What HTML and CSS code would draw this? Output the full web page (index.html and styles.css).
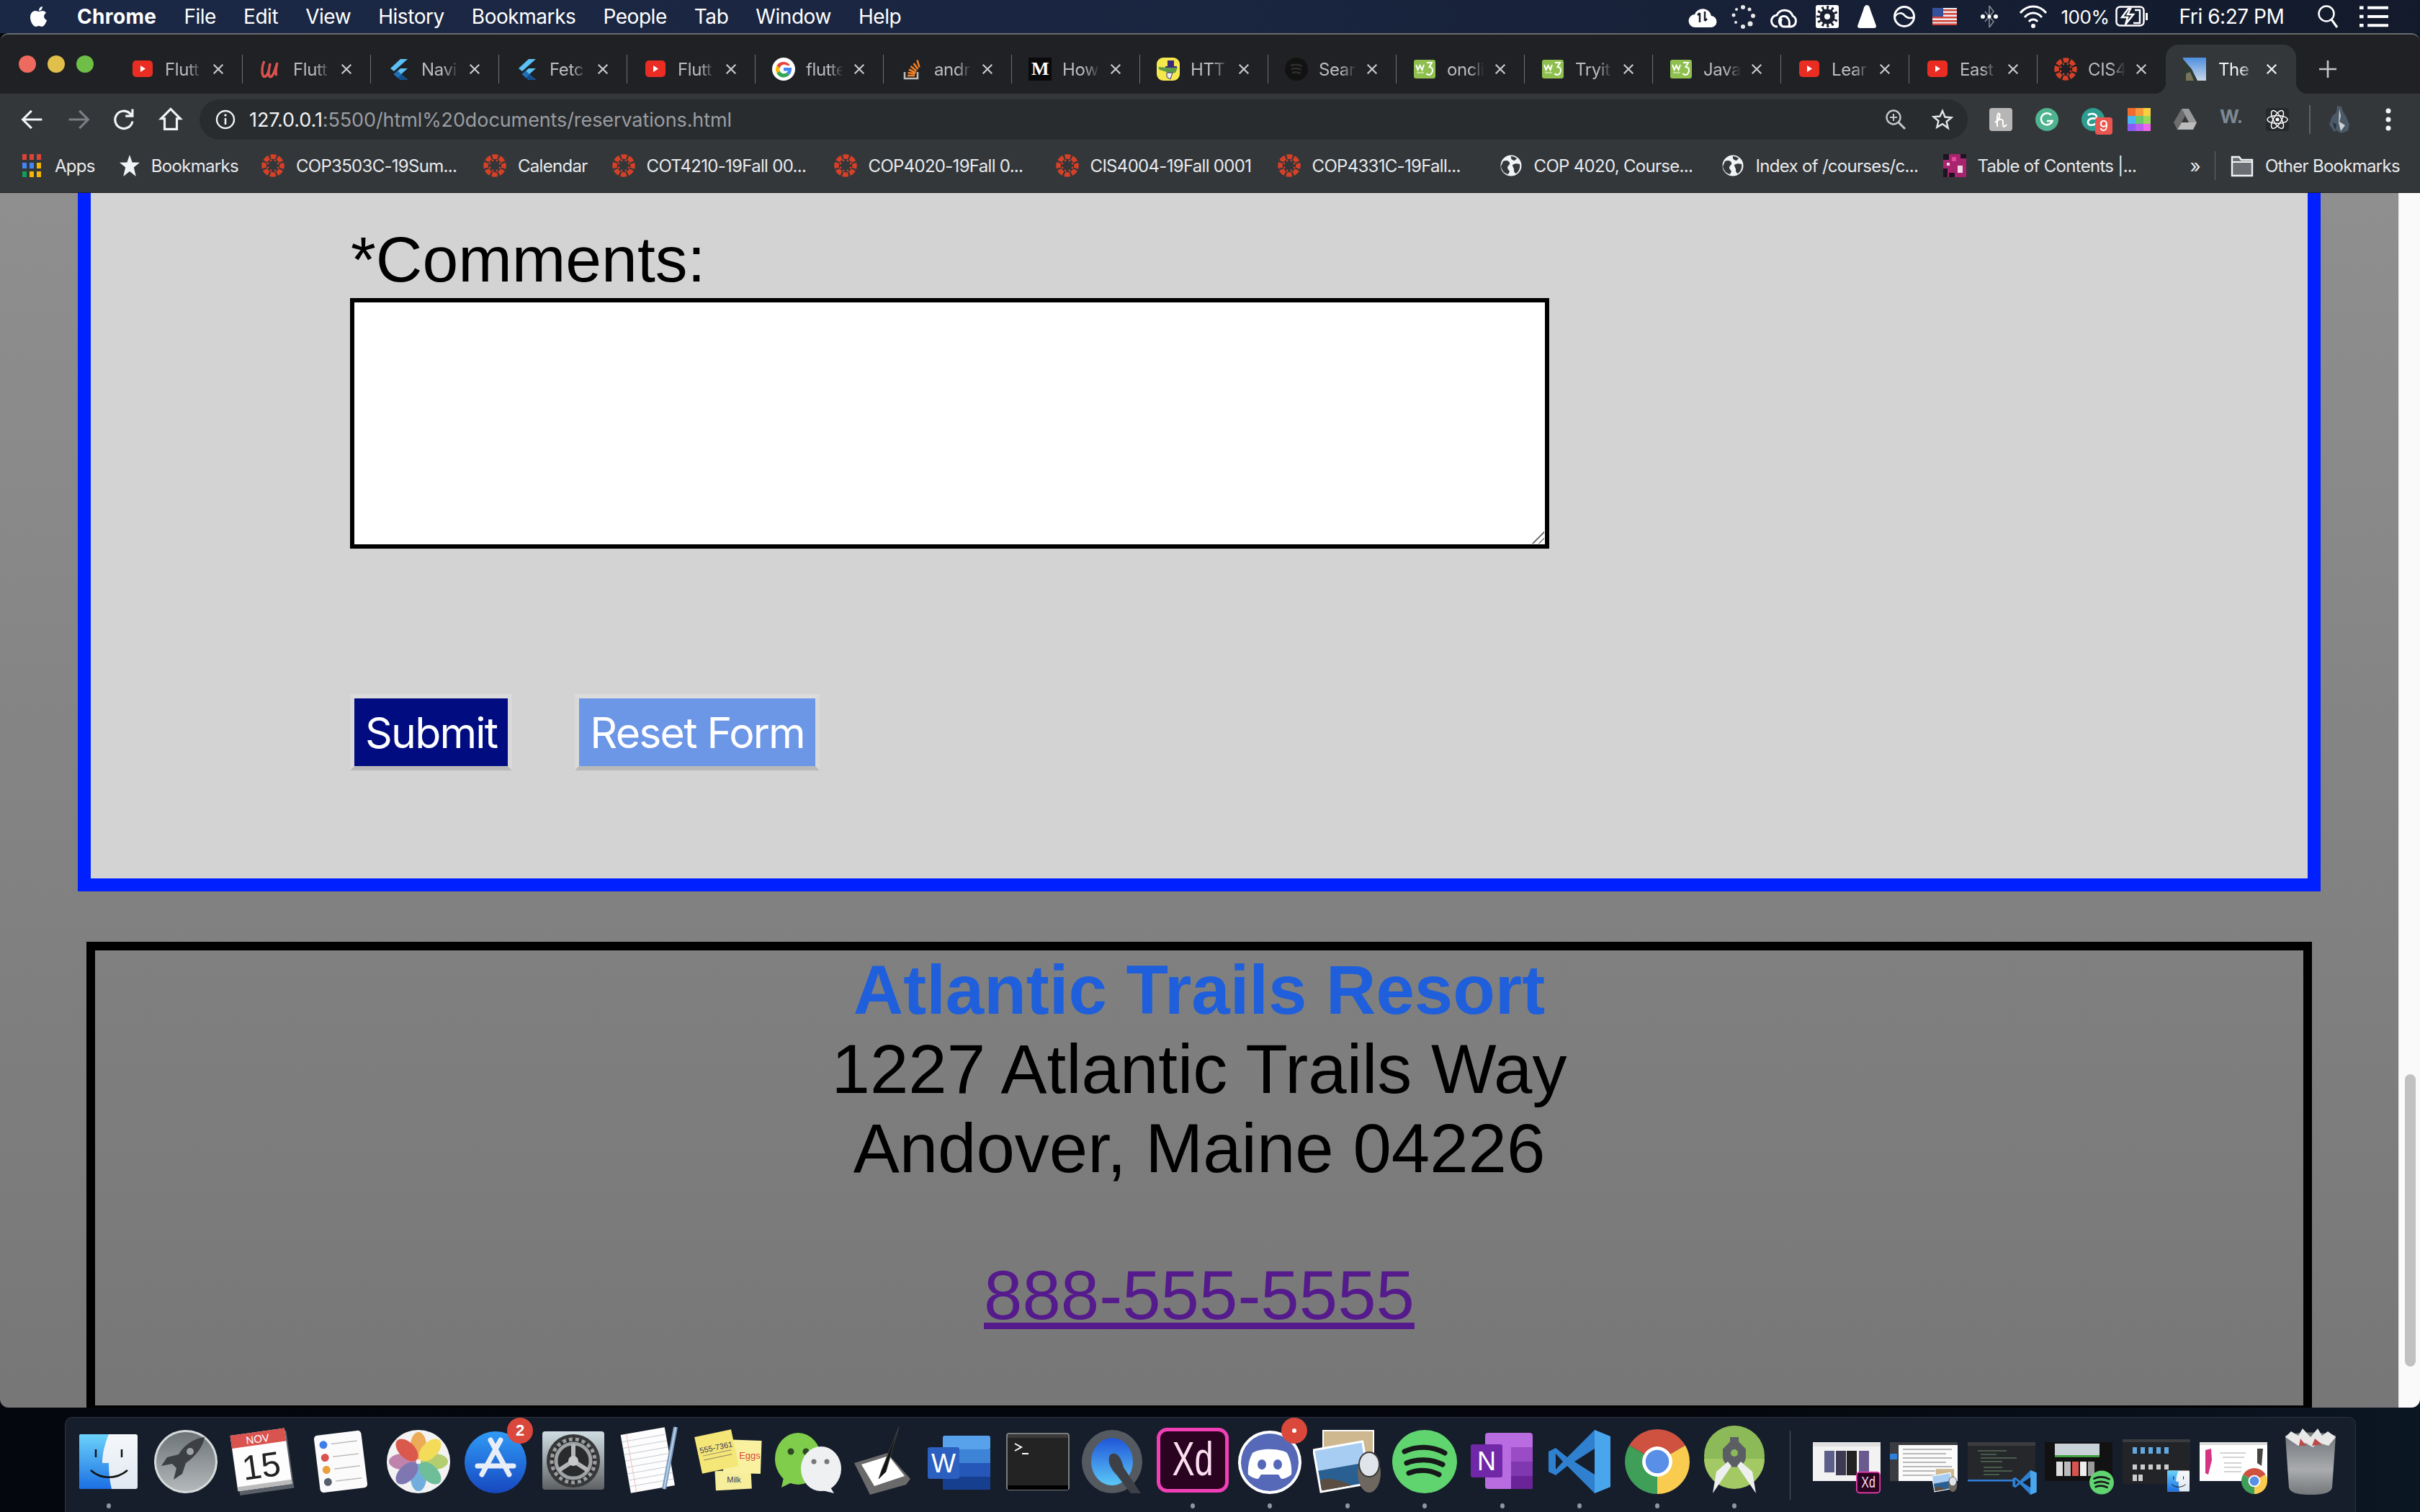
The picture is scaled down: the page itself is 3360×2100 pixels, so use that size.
FILE: index.html
```html
<!DOCTYPE html>
<html lang="en">
<head>
<meta charset="utf-8">
<title>The Atlantic Trails Resort - Reservations</title>
<link rel="stylesheet" href="styles.css">
</head>
<body>
<svg class="defs" aria-hidden="true">
  <defs>
    <linearGradient id="gFinderL" x1="0" y1="0" x2="0" y2="1"><stop offset="0" stop-color="#6bd3fb"/><stop offset="1" stop-color="#1c6fe3"/></linearGradient>
    <linearGradient id="gFinderR" x1="0" y1="0" x2="0" y2="1"><stop offset="0" stop-color="#f6f8fa"/><stop offset="1" stop-color="#dfe8f2"/></linearGradient>
    <linearGradient id="gRocket" x1="0" y1="0" x2="0" y2="1"><stop offset="0" stop-color="#6c7478"/><stop offset="1" stop-color="#b4b8ba"/></linearGradient>
    <linearGradient id="gStore" x1="0" y1="0" x2="0" y2="1"><stop offset="0" stop-color="#2f9bf6"/><stop offset="1" stop-color="#1747c0"/></linearGradient>
    <linearGradient id="gGear" x1="0" y1="0" x2="0" y2="1"><stop offset="0" stop-color="#cfdde2"/><stop offset=".5" stop-color="#9aa3a7"/><stop offset="1" stop-color="#5e6163"/></linearGradient>
    <linearGradient id="gTrash" x1="0" y1="0" x2="0" y2="1"><stop offset="0" stop-color="#6f7378"/><stop offset=".6" stop-color="#a9abad"/><stop offset="1" stop-color="#74777a"/></linearGradient>
    <linearGradient id="gQt" x1="0" y1="0" x2="0" y2="1"><stop offset="0" stop-color="#1f55d8"/><stop offset="1" stop-color="#5cc8f8"/></linearGradient>

    <symbol id="yt" viewBox="0 0 32 32"><rect x="2" y="4" width="28" height="23" rx="5" fill="#ea2d23"/><path d="M13 11l7 4.5-7 4.5z" fill="#fff"/></symbol>
    <symbol id="udemy" viewBox="0 0 32 32"><path d="M7 5C4 10 3 20 5 25c2 3 6 1 8-6l2-11M15 9c-2 8-3 14-1 17 2 2 5 0 8-10l3-9c-2 8-3 14-1 18" fill="none" stroke="#d9524e" stroke-width="3.4"/></symbol>
    <symbol id="flutter" viewBox="0 0 32 32"><path d="M18 2h10L9 19 4 15z" fill="#5bc0f5"/><path d="M18 15h10l-9 8 9 8H18l-9-8z" fill="#5bc0f5"/><path d="M9 23l5-5 5 5-5 5z" fill="#1f6fb8"/><path d="M14 28l5-5 9 8H18z" fill="#0f4f90"/></symbol>
    <symbol id="google" viewBox="0 0 32 32"><circle cx="16" cy="16" r="16" fill="#fff"/><path d="M25 11A11 11 0 0 0 6.5 11l4 4A6.5 6.5 0 0 1 21 11z" fill="#ea4335"/><path d="M6.5 11a11 11 0 0 0 0 11l4-3.5a6.5 6.5 0 0 1 0-3.5z" fill="#fbbc05"/><path d="M6.5 22A11 11 0 0 0 24 24l-4-3a6.5 6.5 0 0 1-9.5-2.500z" fill="#34a853"/><path d="M27 14H16v4.500h6a5 5 0 0 1-2 2.500l4 3c2-2 3.500-6 3-10z" fill="#4285f4"/></symbol>
    <symbol id="so" viewBox="0 0 32 32"><path d="M6 20v9h18v-9" fill="none" stroke="#bcbbbb" stroke-width="2.600"/><path d="M10 25h10M10.500 21l10 1.500M12 16.500l9.500 4.500M14.500 12l8 6.500M18.500 8l6 8M23.500 3.500l3 10" stroke="#f48024" stroke-width="2.600" fill="none"/></symbol>
    <symbol id="medium" viewBox="0 0 32 32"><rect width="32" height="32" fill="#0a0a0a"/><text x="16" y="24" text-anchor="middle" class="serif-m">M</text></symbol>
    <symbol id="gator" viewBox="0 0 32 32"><rect width="32" height="32" rx="9" fill="#f5e84d"/><path d="M15 4h9v8h4v2H12v-2h3z" fill="#3b2a78"/><path d="M2 13l13 1 14 0-3 7-8 1-7-3-7-2z" fill="#5e9b47"/><path d="M14 21l8 0-3 9-5-3z" fill="#e8ecef" stroke="#3b2a78"/></symbol>
    <symbol id="spot-dark" viewBox="0 0 32 32"><circle cx="16" cy="16" r="16" fill="#121212"/><path d="M8 11c6-2 11-2 16 1M9 16c5-1.500 9-1.500 14 1M10 21c4-1 8-1 12 1" fill="none" stroke="#2f2f2f" stroke-width="2.500"/></symbol>
    <symbol id="w3" viewBox="0 0 32 32"><rect x="1" y="3" width="30" height="26" rx="3" fill="#8fc04f"/><path d="M4 10l2.500 7 3-6 3 6 2.500-7M19 7h7l-3.500 6c3 0 4.500 2 4.500 5s-2.500 6-4.500 6c-2 0-3.500-1-4-2" fill="none" stroke="#fff" stroke-width="2"/><path d="M5 21h10" stroke="#d8eab8" stroke-width="1.500"/></symbol>
    <symbol id="canvas" viewBox="0 0 32 32"><circle cx="16" cy="16" r="12.500" fill="none" stroke="#d64027" stroke-width="6.500" stroke-dasharray="7.500 2.320" stroke-dashoffset="3.700"/><g fill="#d64027"><circle cx="22.900" cy="18.900" r="1.300"/><circle cx="18.900" cy="22.900" r="1.300"/><circle cx="13.100" cy="22.900" r="1.300"/><circle cx="9.100" cy="18.900" r="1.300"/><circle cx="9.100" cy="13.100" r="1.300"/><circle cx="13.100" cy="9.100" r="1.300"/><circle cx="18.900" cy="9.100" r="1.300"/><circle cx="22.900" cy="13.100" r="1.300"/></g></symbol>
    <symbol id="globe" viewBox="0 0 32 32"><circle cx="16" cy="16" r="14.500" fill="#f1f3f4"/><path d="M5 10c4-2 8-1 9 2 1 3-3 4-3 7 0 2 2 3 3 5l-2 4c-5-1-9-5-10-11zM18 15c3-2 7-2 10-1 1 5-1 10-5 13-3-1-3-4-3-6s-2-3-2-6zM16 3c2 0 6 1 8 3l-3 3c-2 0-4-1-5-3z" fill="#35383b"/></symbol>
    <symbol id="x" viewBox="0 0 20 20"><path d="M3 3l14 14M17 3L3 17" stroke="currentColor" stroke-width="2.400" fill="none"/></symbol>
    <symbol id="finder" viewBox="0 0 81 76"><rect width="81" height="76" rx="3" fill="url(#gFinderR)"/><path d="M3 0h38c-6 14-9 28-9 40h9c0 12 1 24 4 36H3a3 3 0 0 1-3-3V3a3 3 0 0 1 3-3z" fill="url(#gFinderL)"/><path d="M23 21v11M59 21v11" stroke="#111" stroke-width="2.500"/><path d="M16 50c14 13 36 13 51 0" fill="none" stroke="#111" stroke-width="2.500"/></symbol>
    <symbol id="xd" viewBox="0 0 100 90"><rect x="2.500" y="2.500" width="95" height="85" rx="12" fill="#2a0320" stroke="#f03fb5" stroke-width="5"/><text x="0" y="0" text-anchor="middle" class="xd-t" transform="translate(50 66) scale(.78 1.12)">Xd</text></symbol>
    <symbol id="spotify" viewBox="0 0 90 88"><ellipse cx="45" cy="44" rx="45" ry="44" fill="#5fd46f"/><path d="M17 30c17-8 38-8 56 2M20 46c14-6 34-6 50 2M23 60c13-5 28-5 42 2" fill="none" stroke="#17181a" stroke-width="7" stroke-linecap="round"/></symbol>
    <symbol id="vscode" viewBox="0 0 86 88"><path d="M64 0L26 38 10 25 0 30v28l10 5 16-13 38 38 22-9V9z" fill="#2f80cf"/><path d="M64 0l22 9v70l-22 9z" fill="#4aa6ec"/><path d="M64 26v36L36 44z" fill="#161d2b"/><path d="M10 33l10 11-10 11z" fill="#161d2b"/></symbol>
    <symbol id="chrome" viewBox="0 0 86 86"><path d="M43 43L5.800 21.500A43 43 0 0 1 80.200 21.500z" fill="#cf5241"/><path d="M43 43L80.200 21.500A43 43 0 0 1 43 86z" fill="#f9cb4e"/><path d="M43 43L43 86A43 43 0 0 1 5.800 21.500z" fill="#3f9e57"/><circle cx="43" cy="43" r="20" fill="#fff"/><circle cx="43" cy="43" r="15.500" fill="#5a8fe8"/></symbol>
    <symbol id="preview" viewBox="0 0 96 88"><rect x="14" y="1" width="70" height="68" fill="#cdb88f" stroke="#fff" stroke-width="2"/><g transform="rotate(-10 40 52)"><rect x="4" y="20" width="72" height="62" fill="#fff"/><rect x="7" y="23" width="66" height="28" fill="#a8cdf2"/><rect x="7" y="51" width="66" height="28" fill="#2a5f92"/><path d="M7 79v-14c10-4 20 2 30 6l12 8z" fill="#5b4d42"/></g><ellipse cx="78" cy="60" rx="16" ry="27" fill="#6d675f"/><ellipse cx="78" cy="48" rx="14" ry="17" fill="#dfe5ea" stroke="#3c3a38" stroke-width="2"/></symbol>
  </defs>
</svg>

<header class="menubar">
  <svg class="apple" viewBox="0 0 24 30"><path d="M17 1c0 3-2 6-5 6 0-3 2-6 5-6zM12 8c2 0 3-1 5-1 2 0 4 1 5 3-4 2-4 8 1 10-1 4-4 9-7 9-2 0-2-1-4-1s-3 1-4 1c-4 0-8-7-8-13 0-6 4-9 7-9 2 0 3 1 5 1z" fill="#fff"/></svg>
  <nav class="menus">
    <span class="menu-app">Chrome</span><span>File</span><span>Edit</span><span>View</span><span>History</span><span>Bookmarks</span><span>People</span><span>Tab</span><span>Window</span><span>Help</span>
  </nav>
  <div class="status">
    <svg class="st" viewBox="0 0 40 34"><path d="M10 32a9 9 0 0 1-1-18 12 12 0 0 1 23 2 8 8 0 0 1-1 16z" fill="#fff"/><path d="M16 12v13M16 12l-3 3M23 23V10M23 23l3-3" stroke="#1a2030" stroke-width="2.500" fill="none"/></svg>
    <svg class="st" viewBox="0 0 34 34"><g fill="#e8e8e8"><circle cx="17" cy="4" r="3"/><circle cx="26" cy="7" r="2.500"/><circle cx="31" cy="16" r="3"/><circle cx="27" cy="27" r="3.500"/><circle cx="17" cy="31" r="3"/><circle cx="7" cy="25" r="2"/><circle cx="4" cy="15" r="2.500"/><circle cx="8" cy="7" r="2"/></g></svg>
    <svg class="st" viewBox="0 0 40 34"><path d="M11 31a8 8 0 0 1-1-16 12 12 0 0 1 22 1 8 8 0 0 1-2 15H20c-5 0-8-6-6-11 2-4 8-5 11-1 3 3 3 7 2 12M18 31c-3-2-4-8-1-11" fill="none" stroke="#fff" stroke-width="3"/></svg>
    <svg class="st" viewBox="0 0 34 34"><rect x="1" y="1" width="32" height="32" fill="#fff" rx="3"/><circle cx="17" cy="17" r="15" fill="#1a2030"/><circle cx="17" cy="17" r="13" fill="none" stroke="#fff" stroke-width="5" stroke-dasharray="4 3"/><circle cx="17" cy="17" r="4" fill="#fff"/></svg>
    <svg class="st" viewBox="0 0 34 34"><path d="M17 1c3 0 4 3 5 7l8 22c0 2-1 3-3 3H7c-2 0-3-1-3-3l8-22c1-4 2-7 5-7z" fill="#fff"/></svg>
    <svg class="st" viewBox="0 0 34 34"><circle cx="17" cy="17" r="13.500" fill="none" stroke="#fff" stroke-width="3"/><path d="M4 17c4-6 10-6 14-1 3 3 7 4 12 2" fill="none" stroke="#fff" stroke-width="2.500"/></svg>
    <svg class="st st-flag" viewBox="0 0 34 24"><rect width="34" height="24" fill="#eee"/><g fill="#d4433a"><rect y="2" x="14" width="20" height="2.500"/><rect y="7" x="14" width="20" height="2.500"/><rect y="12" width="34" height="2.500"/><rect y="17" width="34" height="2.500"/><rect y="21.500" width="34" height="2.500"/></g><rect width="15" height="12" fill="#34509a"/></svg>
    <svg class="st" viewBox="0 0 30 34"><path d="M15 2v30M15 2l6 8-12 14M15 32l6-8-12-14" fill="none" stroke="#8a8f98" stroke-width="1.500"/><circle cx="6" cy="17" r="3" fill="#fff"/><circle cx="24" cy="17" r="3" fill="#fff"/><circle cx="15" cy="17" r="2.500" fill="#fff"/></svg>
    <svg class="st" viewBox="0 0 40 34"><path d="M2 12c10-12 26-12 36 0M8 18c7-8 17-8 24 0M14 24c3-4 9-4 12 0" fill="none" stroke="#fff" stroke-width="3"/><circle cx="20" cy="30" r="3" fill="#fff"/></svg>
    <span class="st-text st-pct">100%</span>
    <svg class="battery" viewBox="0 0 46 30"><rect x="1.500" y="1.500" width="38" height="26" rx="5" fill="none" stroke="#fff" stroke-width="2.500"/><rect x="42" y="10" width="3" height="10" fill="#fff"/><path d="M18 4L9 16h8l-3 10 11-14h-8l4-8zM27 6h7v18h-9" fill="none" stroke="#fff" stroke-width="2.500"/></svg>
    <span class="st-text st-time">Fri 6:27 PM</span>
    <svg class="st" viewBox="0 0 30 34"><circle cx="13" cy="13" r="10.500" fill="none" stroke="#fff" stroke-width="2.500"/><path d="M20 21l8 11" stroke="#fff" stroke-width="3"/></svg>
    <svg class="st" viewBox="0 0 36 30"><path d="M10 4h26M10 15h26M10 26h26" stroke="#fff" stroke-width="3.500"/><path d="M0 4h5M0 15h5M0 26h5" stroke="#fff" stroke-width="4"/></svg>
  </div>
</header>

<div class="window">
  <div class="tabstrip">
    <div class="lights"><i class="light red"></i><i class="light yellow"></i><i class="light green"></i></div>
    <div class="tab"><svg class="fav"><use href="#yt"/></svg><span class="title">Flutt</span><svg class="x"><use href="#x"/></svg></div><i class="tabsep"></i>
    <div class="tab"><svg class="fav"><use href="#udemy"/></svg><span class="title">Flutt</span><svg class="x"><use href="#x"/></svg></div><i class="tabsep"></i>
    <div class="tab"><svg class="fav"><use href="#flutter"/></svg><span class="title">Navi</span><svg class="x"><use href="#x"/></svg></div><i class="tabsep"></i>
    <div class="tab"><svg class="fav"><use href="#flutter"/></svg><span class="title">Fetc</span><svg class="x"><use href="#x"/></svg></div><i class="tabsep"></i>
    <div class="tab"><svg class="fav"><use href="#yt"/></svg><span class="title">Flutt</span><svg class="x"><use href="#x"/></svg></div><i class="tabsep"></i>
    <div class="tab"><svg class="fav"><use href="#google"/></svg><span class="title">flutte</span><svg class="x"><use href="#x"/></svg></div><i class="tabsep"></i>
    <div class="tab"><svg class="fav"><use href="#so"/></svg><span class="title">andr</span><svg class="x"><use href="#x"/></svg></div><i class="tabsep"></i>
    <div class="tab"><svg class="fav"><use href="#medium"/></svg><span class="title">How</span><svg class="x"><use href="#x"/></svg></div><i class="tabsep"></i>
    <div class="tab"><svg class="fav"><use href="#gator"/></svg><span class="title">HTT</span><svg class="x"><use href="#x"/></svg></div><i class="tabsep"></i>
    <div class="tab"><svg class="fav"><use href="#spot-dark"/></svg><span class="title">Sear</span><svg class="x"><use href="#x"/></svg></div><i class="tabsep"></i>
    <div class="tab"><svg class="fav"><use href="#w3"/></svg><span class="title">oncli</span><svg class="x"><use href="#x"/></svg></div><i class="tabsep"></i>
    <div class="tab"><svg class="fav"><use href="#w3"/></svg><span class="title">Tryit</span><svg class="x"><use href="#x"/></svg></div><i class="tabsep"></i>
    <div class="tab"><svg class="fav"><use href="#w3"/></svg><span class="title">Java</span><svg class="x"><use href="#x"/></svg></div><i class="tabsep"></i>
    <div class="tab"><svg class="fav"><use href="#yt"/></svg><span class="title">Lear</span><svg class="x"><use href="#x"/></svg></div><i class="tabsep"></i>
    <div class="tab"><svg class="fav"><use href="#yt"/></svg><span class="title">East</span><svg class="x"><use href="#x"/></svg></div><i class="tabsep"></i>
    <div class="tab"><svg class="fav"><use href="#canvas"/></svg><span class="title">CIS4</span><svg class="x"><use href="#x"/></svg></div>
    <div class="tab active"><svg class="fav" viewBox="0 0 32 32"><defs><linearGradient id="gSky" x1="0" y1="0" x2="0" y2="1"><stop offset="0" stop-color="#4e8fe0"/><stop offset="1" stop-color="#c8d8e8"/></linearGradient></defs><rect width="32" height="32" fill="url(#gSky)"/><path d="M0 2l12 14 8 16H0z" fill="#2f3a32"/><path d="M4 22l6-2 5 12H4z" fill="#77745a"/></svg><span class="title">The</span><svg class="x"><use href="#x"/></svg></div>
    <svg class="newtab" viewBox="0 0 24 24"><path d="M12 0v24M0 12h24" stroke="#c4c7ca" stroke-width="2.600"/></svg>
  </div>

  <div class="toolbar">
    <svg class="navbtn" viewBox="0 0 28 28"><path d="M25 14H4M13 4L3 14l10 10" fill="none" stroke="#f1f3f4" stroke-width="2.600"/></svg>
    <svg class="navbtn" viewBox="0 0 28 28"><path d="M3 14h21M15 4l10 10-10 10" fill="none" stroke="#7b7f83" stroke-width="2.600"/></svg>
    <svg class="navbtn" viewBox="0 0 28 28"><path d="M23 16a10 10 0 1 1-3-9l3 3M23 2v8h-8" fill="none" stroke="#f1f3f4" stroke-width="2.600"/></svg>
    <svg class="navbtn" viewBox="0 0 28 28"><path d="M14 2L3 13h4v12h14V13h4z" fill="none" stroke="#f1f3f4" stroke-width="2.600"/></svg>
    <div class="omnibox">
      <svg class="info" viewBox="0 0 28 28"><circle cx="14" cy="14" r="12" fill="none" stroke="#f1f3f4" stroke-width="2.400"/><path d="M14 12v9" stroke="#f1f3f4" stroke-width="2.600"/><circle cx="14" cy="8" r="1.700" fill="#f1f3f4"/></svg>
      <div class="url"><span class="host">127.0.0.1</span>:5500/html%20documents/reservations.html</div>
      <svg class="omni-i" viewBox="0 0 30 30"><circle cx="12" cy="12" r="9.500" fill="none" stroke="#c4c7ca" stroke-width="2.400"/><path d="M12 7v10M7 12h10" stroke="#c4c7ca" stroke-width="2"/><path d="M19 19l9 9" stroke="#c4c7ca" stroke-width="3"/></svg>
      <svg class="omni-i" viewBox="0 0 30 30"><path d="M15 3l3.500 8.500 9 .7-6.900 5.800 2.100 8.800L15 21.200l-7.700 4.600 2.100-8.800-6.900-5.800 9-.7z" fill="none" stroke="#e3e5e8" stroke-width="2.400"/></svg>
    </div>
    <div class="exts">
      <svg class="ext" viewBox="0 0 32 32"><rect width="32" height="32" rx="4" fill="#b6b6b6"/><path d="M8 20c4-2 8-8 6-12-2-2-3 2-3 6v12M11 18c3-3 8-3 8 1 0 3-1 5 1 7 1 0 3-2 4-3" fill="none" stroke="#fff" stroke-width="2"/></svg>
      <svg class="ext" viewBox="0 0 32 32"><circle cx="16" cy="16" r="16" fill="#4fb38f"/><path d="M22 10a8 8 0 1 0 1.500 8H16" fill="none" stroke="#fff" stroke-width="2.500"/></svg>
      <span class="ext-wrap"><svg class="ext" viewBox="0 0 32 32"><circle cx="16" cy="16" r="16" fill="#2e9c8f"/><path d="M9 10c3-3 12-3 12 3v11M21 15c-8-2-12 1-12 5 0 5 9 5 12 0" fill="none" stroke="#fff" stroke-width="2.600"/></svg><b class="ext-badge">9</b></span>
      <svg class="ext" viewBox="0 0 32 32"><rect width="11" height="11" fill="#ef6b2e"/><rect x="11" width="11" height="11" fill="#f59b3b"/><rect x="22" width="10" height="11" fill="#f7d040"/><rect y="11" width="11" height="11" fill="#4bb6f0"/><rect x="11" y="11" width="11" height="11" fill="#66c96b"/><rect x="22" y="11" width="10" height="11" fill="#9bd75a"/><rect y="22" width="11" height="10" fill="#8a5cf0"/><rect x="11" y="22" width="11" height="10" fill="#bb5ff0"/><rect x="22" y="22" width="10" height="10" fill="#ee66ea"/></svg>
      <svg class="ext" viewBox="0 0 32 32"><path d="M11 1h10l11 19H21z" fill="#9a9a9a"/><path d="M11 1L0 20l5 10 11-19z" fill="#6d6d6d"/><path d="M5 30h22l5-10H11z" fill="#bbb"/></svg>
      <span class="ext-w">W.</span>
      <svg class="ext" viewBox="0 0 32 32"><rect width="32" height="32" rx="4" fill="#26292c"/><g fill="none" stroke="#fff" stroke-width="1.500"><ellipse cx="16" cy="16" rx="14" ry="5.500"/><ellipse cx="16" cy="16" rx="14" ry="5.500" transform="rotate(60 16 16)"/><ellipse cx="16" cy="16" rx="14" ry="5.500" transform="rotate(120 16 16)"/></g><circle cx="16" cy="16" r="2.500" fill="#fff"/></svg>
      <i class="ext-sep"></i>
      <svg class="avatar" viewBox="0 0 36 40"><path d="M15 1l6 1 2 7 4 6 5 12-2 9-10 3-6-4-3 2-7-10 4-12 6-5z" fill="#4c5a68"/><path d="M18 5l2 10-2 8 8 5-6 8-3-12z" fill="#c9d0d6"/><path d="M9 24l5 3-2 8z" fill="#23303a"/></svg>
      <svg class="dots" viewBox="0 0 8 32"><circle cx="4" cy="4" r="3.500" fill="#f1f3f4"/><circle cx="4" cy="16" r="3.500" fill="#f1f3f4"/><circle cx="4" cy="28" r="3.500" fill="#f1f3f4"/></svg>
    </div>
  </div>

  <div class="bookmarks">
    <div class="bm"><svg class="bm-grid" viewBox="0 0 26 32"><g><rect width="6" height="8" fill="#db4437"/><rect x="10" width="6" height="8" fill="#db4437"/><rect x="20" width="6" height="8" fill="#db4437"/><rect y="12" width="6" height="8" fill="#4285f4"/><rect x="10" y="12" width="6" height="8" fill="#4285f4"/><rect x="20" y="12" width="6" height="8" fill="#f4b400"/><rect y="24" width="6" height="8" fill="#0f9d58"/><rect x="10" y="24" width="6" height="8" fill="#f4b400"/><rect x="20" y="24" width="6" height="8" fill="#f4b400"/></g></svg><span>Apps</span></div>
    <div class="bm bm-folder"><svg class="bm-star" viewBox="0 0 28 32"><path d="M14 1l3.600 10.500 10.400.300-8.200 6.800 3 12.400L14 24l-8.800 7 3-12.400L0 11.800l10.400-.300z" fill="#f1f3f4"/></svg><span>Bookmarks</span></div>
    <div class="bm bm-fix"><svg class="bm-i"><use href="#canvas"/></svg><span>COP3503C-19Sum...</span></div>
    <div class="bm"><svg class="bm-i"><use href="#canvas"/></svg><span>Calendar</span></div>
    <div class="bm bm-fix"><svg class="bm-i"><use href="#canvas"/></svg><span>COT4210-19Fall 00...</span></div>
    <div class="bm bm-fix"><svg class="bm-i"><use href="#canvas"/></svg><span>COP4020-19Fall 0...</span></div>
    <div class="bm bm-fix"><svg class="bm-i"><use href="#canvas"/></svg><span>CIS4004-19Fall 0001</span></div>
    <div class="bm bm-fix"><svg class="bm-i"><use href="#canvas"/></svg><span>COP4331C-19Fall...</span></div>
    <div class="bm bm-fix"><svg class="bm-i"><use href="#globe"/></svg><span>COP 4020, Course...</span></div>
    <div class="bm bm-fix"><svg class="bm-i"><use href="#globe"/></svg><span>Index of /courses/c...</span></div>
    <div class="bm bm-fix"><svg class="bm-i" viewBox="0 0 32 32"><rect width="32" height="32" fill="#a8246f"/><path d="M0 0h8v8H0zM0 20h6v12H0zM24 0h8v6h-8zM8 26h8v6H8z" fill="#1c1420"/><rect x="20" y="16" width="7" height="10" fill="#f0d8e4"/><rect x="5" y="12" width="4" height="4" fill="#f0d8e4"/><rect x="12" y="4" width="6" height="6" fill="#e0489a"/></svg><span>Table of Contents |...</span></div>
    <div class="bm-end">
      <span class="chev">»</span><i class="bm-sep"></i>
      <div class="bm"><svg class="bm-i" viewBox="0 0 32 32"><path d="M2 4h10l3 4h15v22H2z" fill="#6b6f73" stroke="#f1f3f4" stroke-width="2.400"/><path d="M2 11h28" stroke="#f1f3f4" stroke-width="2"/></svg><span>Other Bookmarks</span></div>
    </div>
  </div>

  <div class="viewport">
    <main class="page">
      <form class="card">
        <label class="field-label" for="comments">*Comments:</label>
        <textarea class="comments" id="comments"></textarea>
        <div class="actions">
          <button type="button" class="btn btn-submit">Submit</button>
          <button type="reset" class="btn btn-reset">Reset Form</button>
        </div>
      </form>
      <footer class="footer">
        <div class="resort">Atlantic Trails Resort</div>
        <div>1227 Atlantic Trails Way</div>
        <div>Andover, Maine 04226</div>
        <a class="phone" href="#comments">888-555-5555</a>
      </footer>
    </main>
    <div class="scrollbar"><div class="thumb"></div></div>
  </div>
</div>

<div class="dock">
  <div class="slot"><svg class="di" viewBox="0 0 108 96"><use href="#finder" x="13" y="10" width="81" height="76"/></svg><i class="dot"></i></div>
  <div class="slot"><svg class="di" viewBox="0 0 108 96"><circle cx="54" cy="48" r="44" fill="#d5dadb"/><circle cx="54" cy="48" r="41" fill="url(#gRocket)"/><path d="M80 14c-14 2-28 10-36 24l-16 4-8 12 15-3 6 6-4 16 12-8 5-15c12-8 24-22 26-36z" fill="#3c3f43"/><circle cx="60" cy="34" r="5" fill="#9ea3a6"/></svg><i class="dot off"></i></div>
  <div class="slot"><svg class="di" viewBox="0 0 108 96"><g transform="rotate(-8 54 48)"><rect x="15" y="10" width="76" height="80" fill="#5a6068"/><rect x="13" y="6" width="76" height="78" fill="#fdfdfd"/><path d="M13 6h76v18H13z" fill="#d9534f"/><rect x="13" y="78" width="76" height="6" fill="#bbb"/><text x="50" y="21" text-anchor="middle" class="cal-m">NOV</text><text x="50" y="70" text-anchor="middle" class="cal-d">15</text></g></svg><i class="dot off"></i></div>
  <div class="slot"><svg class="di" viewBox="0 0 108 96"><g transform="rotate(-7 54 48)"><rect x="21" y="8" width="66" height="80" rx="5" fill="#fbfbfb"/><circle cx="33" cy="22" r="5.500" fill="#3f7ee8"/><circle cx="33" cy="40" r="5.500" fill="#d9534f"/><circle cx="33" cy="57" r="5.500" fill="#eb9f3c"/><circle cx="33" cy="74" r="5.500" fill="#56606b"/><path d="M44 22h36M44 40h36M44 57h36M44 74h36" stroke="#bdbdbd" stroke-width="1.500"/></g></svg><i class="dot off"></i></div>
  <div class="slot"><svg class="di" viewBox="0 0 108 96"><circle cx="54" cy="48" r="44" fill="#f3f3f3"/><g opacity=".85"><ellipse cx="54" cy="26" rx="11" ry="19" fill="#eb9f3c"/><ellipse cx="54" cy="70" rx="11" ry="19" fill="#5ba3da"/><ellipse cx="32" cy="48" rx="19" ry="11" fill="#b870a0"/><ellipse cx="76" cy="48" rx="19" ry="11" fill="#a9c75a"/><ellipse cx="38" cy="32" rx="11" ry="19" transform="rotate(-45 38 32)" fill="#d63d2f"/><ellipse cx="70" cy="32" rx="11" ry="19" transform="rotate(45 70 32)" fill="#f3d93f"/><ellipse cx="38" cy="64" rx="11" ry="19" transform="rotate(45 38 64)" fill="#6a62a6"/><ellipse cx="70" cy="64" rx="11" ry="19" transform="rotate(-45 70 64)" fill="#56b58a"/></g></svg><i class="dot off"></i></div>
  <div class="slot slot-rel"><svg class="di" viewBox="0 0 108 96"><circle cx="54" cy="49" r="43" fill="url(#gStore)"/><path d="M47 18l26 48M61 18L35 66M29 54h50" stroke="#e8eef8" stroke-width="7" stroke-linecap="round"/></svg><b class="badge">2</b><i class="dot off"></i></div>
  <div class="slot"><svg class="di" viewBox="0 0 108 96"><rect x="11" y="6" width="86" height="81" rx="4" fill="url(#gGear)"/><circle cx="54" cy="47" r="37" fill="#36383a"/><circle cx="54" cy="47" r="30" fill="#2a2b2c" stroke="#9b9d9f" stroke-width="5" stroke-dasharray="5 4"/><circle cx="54" cy="47" r="24" fill="none" stroke="#9fa2a4" stroke-width="5"/><path d="M54 47V24M54 47L34 60M54 47l20 13" stroke="#b4b6b8" stroke-width="6"/><circle cx="54" cy="47" r="7" fill="#c6c8ca"/></svg><i class="dot off"></i></div>
  <div class="slot"><svg class="di" viewBox="0 0 108 96"><g transform="rotate(-10 50 50)"><rect x="20" y="5" width="62" height="82" fill="#fdfdfd"/><path d="M20 15h62M20 24h62M20 33h62M20 42h62M20 51h62M20 60h62M20 69h62M20 78h62" stroke="#c5cbd4"/><path d="M28 5v82" stroke="#f0c0c0"/></g><path d="M89 0l-16 86" stroke="#7a9cc0" stroke-width="6"/><path d="M89 0l-16 86" stroke="#c0d2e6" stroke-width="2"/></svg><i class="dot off"></i></div>
  <div class="slot"><svg class="di" viewBox="0 0 108 96"><rect x="36" y="60" width="50" height="27" transform="rotate(-3 60 70)" fill="#f6ee9a"/><rect x="48" y="18" width="52" height="46" transform="rotate(2 70 34)" fill="#f9f1a0"/><g transform="rotate(-12 38 34)"><rect x="12" y="8" width="52" height="52" fill="#f5e678"/><path d="M18 36h40M18 42h40" stroke="#8a8460"/></g><text x="84" y="44" text-anchor="middle" class="sticky-r">Eggs</text><text x="62" y="77" text-anchor="middle" class="sticky-b">Milk</text><text x="38" y="32" text-anchor="middle" transform="rotate(-12 38 32)" class="sticky-b">555-7361</text></svg><i class="dot off"></i></div>
  <div class="slot"><svg class="di" viewBox="0 0 108 96"><ellipse cx="44" cy="44" rx="32" ry="36" fill="#7fcd4b"/><path d="M24 70l-3 14 16-8z" fill="#7fcd4b"/><circle cx="34" cy="34" r="4.500" fill="#2c4a22"/><circle cx="55" cy="34" r="4.500" fill="#2c4a22"/><ellipse cx="76" cy="58" rx="28" ry="31" fill="#eef0f2"/><path d="M88 82l6 10-16-4z" fill="#eef0f2"/><circle cx="66" cy="48" r="3.500" fill="#777"/><circle cx="84" cy="48" r="3.500" fill="#777"/></svg><i class="dot off"></i></div>
  <div class="slot"><svg class="di" viewBox="0 0 108 96"><path d="M14 50l46-14 32 36-6 8-50 14z" fill="#6a6a6a"/><path d="M24 52l38-12 22 28-42 14z" fill="#fff"/><path d="M76 0L52 60l-4 12 10-10z" fill="#111" stroke="#444"/></svg><i class="dot off"></i></div>
  <div class="slot"><svg class="di" viewBox="0 0 108 96"><rect x="30" y="12" width="66" height="75" rx="3" fill="#2457b8"/><rect x="30" y="12" width="66" height="19" rx="3" fill="#57a2ea"/><rect x="30" y="31" width="66" height="19" fill="#3d83d6"/><rect x="30" y="69" width="66" height="18" fill="#173f90"/><rect x="9" y="28" width="44" height="44" rx="3" fill="#2b5fc0"/><text x="31" y="63" text-anchor="middle" class="word-t">W</text></svg><i class="dot off"></i></div>
  <div class="slot"><svg class="di" viewBox="0 0 108 96"><rect x="11" y="9" width="86" height="78" rx="3" fill="#232323" stroke="#9a9a9a" stroke-width="1.500"/><rect x="12" y="10" width="84" height="5" fill="#3a3a3a"/><rect x="12" y="81" width="84" height="6" fill="#000"/><path d="M22 23l9 5-9 5" fill="none" stroke="#fff" stroke-width="2"/><path d="M32 37h9" stroke="#fff" stroke-width="2"/></svg><i class="dot off"></i></div>
  <div class="slot"><svg class="di" viewBox="0 0 108 96"><ellipse cx="50" cy="48" rx="42" ry="44" fill="#545a60"/><ellipse cx="50" cy="48" rx="29" ry="33" fill="url(#gQt)"/><path d="M48 38c8-4 14 2 18 18l24 36H76L56 66c-8-8-14-20-8-28z" fill="#3d4147"/></svg><i class="dot off"></i></div>
  <div class="slot"><svg class="di" viewBox="0 0 108 96"><use href="#xd" x="4" y="1" width="100" height="90"/></svg><i class="dot"></i></div>
  <div class="slot slot-rel"><svg class="di" viewBox="0 0 108 96"><circle cx="54" cy="49" r="44" fill="#fff"/><circle cx="54" cy="49" r="40" fill="#5569b8"/><path d="M30 36c10-7 38-7 48 0 5 9 7 20 6 30-5 4-10 6-14 6l-4-6H42l-4 6c-4 0-9-2-14-6-1-10 1-21 6-30z" fill="#fff"/><ellipse cx="43" cy="52" rx="6" ry="7" fill="#5569b8"/><ellipse cx="65" cy="52" rx="6" ry="7" fill="#5569b8"/></svg><b class="badge dot-badge"></b><i class="dot"></i></div>
  <div class="slot"><svg class="di" viewBox="0 0 108 96"><use href="#preview" x="6" y="4" width="96" height="88"/></svg><i class="dot"></i></div>
  <div class="slot"><svg class="di" viewBox="0 0 108 96"><use href="#spotify" x="9" y="4" width="90" height="88"/></svg><i class="dot"></i></div>
  <div class="slot"><svg class="di" viewBox="0 0 108 96"><rect x="30" y="8" width="66" height="78" rx="4" fill="#b96be0"/><rect x="66" y="28" width="30" height="20" fill="#9a4cc6"/><rect x="66" y="48" width="30" height="20" fill="#8038b0"/><rect x="66" y="68" width="30" height="18" fill="#6a2498"/><rect x="10" y="24" width="44" height="46" rx="3" fill="#7028a8"/><text x="32" y="60" text-anchor="middle" class="word-t">N</text></svg><i class="dot"></i></div>
  <div class="slot"><svg class="di" viewBox="0 0 108 96"><use href="#vscode" x="11" y="4" width="86" height="88"/></svg><i class="dot"></i></div>
  <div class="slot"><svg class="di" viewBox="0 0 108 96"><use href="#chrome" x="9" y="3" width="90" height="90"/></svg><i class="dot"></i></div>
  <div class="slot"><svg class="di" viewBox="0 0 108 96"><ellipse cx="54" cy="40" rx="42" ry="42" fill="#8cba58"/><path d="M12 44h84a42 42 0 0 1-84 0z" fill="#a3c964"/><rect x="48" y="14" width="12" height="14" fill="#5b5f63"/><path d="M54 18l16 18v12a16 16 0 0 1-32 0V36z" fill="#5b5f63" transform="translate(0 -2) scale(1 .9)"/><circle cx="54" cy="36" r="5" fill="#8cba58"/><path d="M50 54L24 92l5-30 16-14M58 54l26 38-5-30-16-14" fill="#eef0f0"/></svg><i class="dot"></i></div>
  <i class="dock-sep"></i>
  <div class="slot"><svg class="di" viewBox="0 0 108 96"><rect x="8" y="21" width="94" height="54" fill="#f2f2f2"/><rect x="8" y="21" width="94" height="6" fill="#e0e0e0"/><rect x="24" y="33" width="14" height="30" fill="#5c5f8a"/><rect x="40" y="33" width="14" height="34" fill="#3b3a50"/><rect x="55" y="33" width="14" height="34" fill="#222"/><rect x="72" y="33" width="14" height="30" fill="#6a5a90"/><use href="#xd" x="68" y="60" width="34" height="34"/></svg><i class="dot off"></i></div>
  <div class="slot"><svg class="di" viewBox="0 0 108 96"><rect x="8" y="21" width="94" height="54" fill="#3a3c40"/><rect x="20" y="25" width="82" height="50" fill="#fbfbfb"/><path d="M26 31h68M26 37h60M26 43h68M26 49h60M26 55h68M26 61h50M26 67h60" stroke="#777" stroke-width="1.200"/><rect x="8" y="37" width="10" height="8" fill="#2e80d8"/><use href="#preview" x="66" y="56" width="36" height="36"/></svg><i class="dot off"></i></div>
  <div class="slot"><svg class="di" viewBox="0 0 108 96"><rect x="8" y="21" width="94" height="54" fill="#25272b"/><rect x="8" y="21" width="94" height="5" fill="#3a3c40"/><path d="M22 33h40M26 38h22M26 43h50M26 48h30M30 56h26M30 61h40M30 66h22" stroke="#6d8f6a" stroke-width="1.200"/><rect x="8" y="73" width="70" height="2.500" fill="#2e80d8"/><use href="#vscode" x="70" y="60" width="34" height="34"/></svg><i class="dot off"></i></div>
  <div class="slot"><svg class="di" viewBox="0 0 108 96"><rect x="8" y="21" width="94" height="54" fill="#121212"/><rect x="22" y="23" width="62" height="16" fill="#c8d2d8"/><rect x="22" y="39" width="62" height="3" fill="#3f9e3f"/><rect x="24" y="48" width="9" height="20" fill="#ddd"/><rect x="35" y="48" width="9" height="20" fill="#bbb"/><rect x="46" y="48" width="9" height="20" fill="#d9534f"/><rect x="57" y="48" width="9" height="20" fill="#eee"/><rect x="68" y="48" width="9" height="20" fill="#999"/><use href="#spotify" x="70" y="60" width="34" height="34"/></svg><i class="dot off"></i></div>
  <div class="slot"><svg class="di" viewBox="0 0 108 96"><rect x="8" y="17" width="94" height="62" fill="#232427"/><rect x="8" y="17" width="94" height="4" fill="#3a3c40"/><g fill="#62a8e0"><rect x="22" y="28" width="6" height="9"/><rect x="33" y="28" width="6" height="9"/><rect x="44" y="28" width="6" height="9"/><rect x="55" y="28" width="6" height="9"/><rect x="66" y="28" width="6" height="9"/></g><g fill="#ccc"><rect x="22" y="52" width="6" height="7"/><rect x="33" y="52" width="6" height="7"/><rect x="44" y="52" width="6" height="7"/><rect x="55" y="52" width="6" height="7"/><rect x="66" y="52" width="6" height="7"/><rect x="22" y="66" width="6" height="9"/><rect x="30" y="66" width="6" height="9"/></g><use href="#finder" x="70" y="57" width="31" height="36"/></svg><i class="dot off"></i></div>
  <div class="slot"><svg class="di" viewBox="0 0 108 96"><rect x="8" y="21" width="94" height="54" fill="#fff"/><rect x="8" y="21" width="94" height="4" fill="#ddd"/><path d="M16 32l8-2 1 16-5 20-4-2z" fill="#d63384"/><path d="M88 30l8 0-2 24-6-4z" fill="#444"/><path d="M36 36h36M40 42h30M42 50h24M42 56h24M42 62h24" stroke="#aaa" stroke-width="1.200"/><use href="#chrome" x="66" y="56" width="36" height="38"/></svg><i class="dot off"></i></div>
  <div class="slot"><svg class="di" viewBox="0 0 108 96"><path d="M19 12c14-6 56-6 70 0l-5 72c-2 8-14 10-30 10s-28-2-30-10z" fill="url(#gTrash)"/><path d="M19 14l8-8 10 6 6-10 11 12 10-12 6 10 8-6 11 8-10 12-14-4-8 6-10-6-10 4z" fill="#e8e8e8"/><path d="M40 16l8 10-10 0zM60 16l10 8-14 2z" fill="#b94a4a"/></svg><i class="dot off"></i></div>
</div>
</body>
</html>
```
FILE: styles.css
```css
* { box-sizing: border-box; }
html, body { margin: 0; padding: 0; }
body {
  width: 3360px;
  height: 2100px;
  overflow: hidden;
  display: flex;
  flex-direction: column;
  background: linear-gradient(90deg, #05070f 0%, #04060c 70%, #0b1623 100%);
  font-family: "Liberation Sans", Arial, sans-serif;
  color: #000;
}
.defs { display: block; width: 0; height: 0; overflow: hidden; flex: none; }

/* macOS menu bar */
.menubar {
  flex: none;
  height: 46px;
  display: flex;
  align-items: center;
  padding-left: 42px;
  background: linear-gradient(90deg, #1b2845 0%, #1a2540 50%, #121a2b 100%);
  color: #fff;
  font-family: Inter, "Liberation Sans", sans-serif;
  font-size: 28px;
  letter-spacing: -.45px;
}
.apple { width: 24px; height: 30px; flex: none; margin-right: 41px; }
.menus { display: flex; gap: 38px; }
.menu-app { font-weight: 700; letter-spacing: .35px; }
.status {
  margin-left: auto;
  display: grid;
  grid-template-columns: 56px 55px 60px 59px 52px 52px 60px 63px 60px 84px 63px 197px 70px 58px;
  align-items: center;
  justify-items: center;
  padding-right: 35px;
  font-size: 26px;
}
.st { width: 40px; height: 34px; }
.st-flag { height: 24px; }
.st-time { font-size: 28px; }
.battery { width: 46px; height: 30px; justify-self: start; }

/* browser window */
.window {
  flex: none;
  height: 1909px;
  display: flex;
  flex-direction: column;
  border-top: 2px solid #6b6c6e;
  border-radius: 12px;
  overflow: hidden;
  background: #202124;
  font-family: Inter, "Liberation Sans", sans-serif;
}
.tabstrip {
  flex: none;
  height: 82px;
  display: flex;
  align-items: center;
  padding-top: 14px;
  background: #202124;
}
.lights {
  width: 159px;
  flex: none;
  align-self: flex-start;
  display: flex;
  gap: 16px;
  padding-left: 26px;
  margin-top: 15px;
}
.light { width: 24px; height: 24px; border-radius: 50%; display: block; }
.red { background: #ee6a5e; }
.yellow { background: #e0bf4b; }
.green { background: #6fbe48; }
.tab {
  width: 177px;
  flex: none;
  height: 68px;
  display: flex;
  align-items: center;
  padding-left: 23px;
  color: #b9bcc0;
  font-size: 24px;
  letter-spacing: -.4px;
  position: relative;
}
.tabsep { width: 1px; height: 40px; background: #6e7074; flex: none; display: block; }
.fav { width: 32px; height: 32px; flex: none; }
.title {
  width: 52px;
  margin-left: 15px;
  white-space: nowrap;
  flex: none;
  -webkit-mask-image: linear-gradient(90deg, #000 60%, transparent 100%);
  mask-image: linear-gradient(90deg, #000 60%, transparent 100%);
}
.x { width: 18px; height: 18px; margin-left: 13px; flex: none; color: #c8cbce; }
.tab.active {
  width: 181px;
  margin-left: 1px;
  background: #33373a;
  color: #f1f3f4;
  border-radius: 18px 18px 0 0;
  padding-left: 24px;
}
.tab.active .x { color: #f1f3f4; margin-left: 15px; }
.tab.active .title { width: 50px; margin-left: 17px; }
.tab.active::before, .tab.active::after {
  content: "";
  position: absolute;
  bottom: 0;
  width: 16px;
  height: 16px;
}
.tab.active::before { left: -16px; background: radial-gradient(circle at 0 0, transparent 16px, #33373a 16.5px); }
.tab.active::after { right: -16px; background: radial-gradient(circle at 100% 0, transparent 16px, #33373a 16.5px); }
.newtab { width: 24px; height: 24px; margin-left: 32px; flex: none; }

.toolbar {
  flex: none;
  height: 64px;
  display: flex;
  align-items: center;
  padding: 8px 0 0 28px;
  background: #33373a;
}
.navbtn { width: 34px; height: 34px; flex: none; margin-right: 30px; }
.omnibox {
  width: 2455px;
  height: 56px;
  margin-left: -7px;
  flex: none;
  display: flex;
  align-items: center;
  padding: 0 20px 0 22px;
  border-radius: 28px;
  background: #292c2f;
  font-size: 27px;
  letter-spacing: -.1px;
}
.info { width: 28px; height: 28px; flex: none; }
.url { margin-left: 19px; flex: 1; color: #9a9da1; white-space: nowrap; }
.host { color: #f1f3f4; }
.omni-i { width: 30px; height: 30px; flex: none; margin-left: 35px; }
.exts { display: flex; align-items: center; padding-left: 30px; }
.ext { width: 32px; height: 32px; flex: none; display: block; }
.exts > .ext, .ext-wrap, .ext-w { margin-right: 32px; }
.ext-wrap { position: relative; display: block; width: 32px; height: 32px; }
.ext-badge {
  position: absolute;
  left: 19px;
  top: 13px;
  width: 24px;
  height: 24px;
  border-radius: 4px;
  background: #e8564f;
  color: #fff;
  font-size: 20px;
  font-weight: 400;
  line-height: 24px;
  text-align: center;
}
.ext-w { width: 32px; color: #7d8892; font-size: 26px; font-weight: 700; line-height: 32px; margin-top: -8px; white-space: nowrap; letter-spacing: -1px; }
.ext-sep { display: block; width: 2px; height: 40px; background: #5d6064; margin: 0 22px 0 -4px; }
.avatar { width: 36px; height: 40px; flex: none; margin-right: 46px; }
.dots { width: 8px; height: 32px; flex: none; }

.bookmarks {
  flex: none;
  height: 74px;
  display: flex;
  align-items: center;
  gap: 34px;
  padding-left: 31px;
  padding-bottom: 1px;
  background: #33373a;
  border-bottom: 1px solid #202225;
  color: #e8eaed;
  font-size: 24px;
  letter-spacing: -.7px;
}
.bm { display: flex; align-items: center; gap: 16px; white-space: nowrap; }
.bm-fix { width: 274px; }
.bm-folder { margin-right: -2px; }
.bm-i { width: 32px; height: 32px; flex: none; }
.bm-grid { width: 26px; height: 32px; flex: none; margin-right: 3px; }
.bm-star { width: 28px; height: 32px; flex: none; }
.bm-end { margin-left: auto; display: flex; align-items: center; padding-right: 28px; }
.chev { font-size: 26px; margin-right: 20px; }
.bm-sep { display: block; width: 1px; height: 40px; background: #63666a; margin-right: 21px; }

/* page viewport */
.viewport {
  flex: 1;
  min-height: 0;
  display: flex;
  overflow: hidden;
  font-family: "Liberation Sans", Arial, sans-serif;
}
.page {
  flex: 1;
  min-width: 0;
  padding: 0 108px;
  background: linear-gradient(180deg, #8f8f8f 0%, #777 100%);
  overflow: hidden;
}
.card {
  display: block;
  height: 970px;
  padding: 42px 0 0 360px;
  background: #d3d3d3;
  border: 18px solid #0020ff;
  border-top: 0;
}
.field-label { display: block; font-size: 89.5px; line-height: 101px; padding-left: 1px; }
.comments {
  display: block;
  width: 1665px;
  height: 348px;
  margin: 3px 0 0;
  border: 6px solid #000;
  border-radius: 0;
  padding: 0;
  outline: 0;
  resize: none;
  background: #fff linear-gradient(135deg, transparent 48%, #7a7a7a 48% 56%, transparent 56% 74%, #7a7a7a 74% 82%, transparent 82%) no-repeat right 1px bottom 1px / 17px 17px;
}
.actions { display: flex; gap: 87px; margin-top: 202px; }
.btn {
  height: 106px;
  border: 6px solid #d9d9d9;
  border-top-color: #dcdcdc;
  border-bottom-color: #b9b9b9;
  color: #fff;
  font: 59px/1 Inter, "Liberation Sans", sans-serif;
  letter-spacing: -1.8px;
  padding: 0 15px;
  margin: 0;
  border-radius: 0;
}
.btn-submit { background: #000c80; }
.btn-reset { background: #6c96e6; }
.footer {
  margin: 70px 12px 0;
  height: 656px;
  border: 12px solid #000;
  text-align: center;
  font-size: 96px;
  line-height: 110px;
}
.resort { color: #1f5fdb; font-weight: 700; }
.phone { display: block; width: max-content; margin: 94px auto 0; color: #551a8b; text-decoration: underline; }
.scrollbar {
  flex: none;
  width: 30px;
  padding: 0 6px 0 8px;
  background: #fafafa;
  border-left: 1px solid #e8e8e8;
  display: flex;
  flex-direction: column;
  justify-content: flex-end;
}
.thumb { height: 406px; margin-bottom: 57px; background: #c1c1c1; border-radius: 8px; }

/* dock */
.dock {
  flex: none;
  width: 3181px;
  height: 132px;
  margin: 13px 0 0 90px;
  padding: 0 0 0 6px;
  display: flex;
  background: #161d2b;
  border: 1px solid #2c3341;
  border-bottom: 0;
  border-radius: 10px 10px 0 0;
}
.slot {
  width: 107.5px;
  flex: none;
  padding-top: 13px;
  display: flex;
  flex-direction: column;
  align-items: center;
  position: relative;
}
.di { width: 108px; height: 96px; flex: none; display: block; overflow: visible; }
.dot { display: block; width: 6px; height: 7px; margin-top: 10px; border-radius: 50%; background: #8e96a3; flex: none; }
.dot.off { visibility: hidden; }
.dock-sep { display: block; flex: none; width: 1px; height: 96px; margin: 18px 23px 0; background: #50565f; }
.badge {
  position: absolute;
  top: 0;
  right: 2px;
  width: 36px;
  height: 36px;
  border-radius: 50%;
  background: #d9483b;
  color: #fff;
  font-size: 22px;
  line-height: 36px;
  text-align: center;
}
.dot-badge::after { content: ""; display: block; width: 6px; height: 6px; margin: 15px auto; border-radius: 50%; background: #fff; }

/* text inside SVG icons */
.serif-m { font: 700 26px "Liberation Serif", serif; fill: #fff; }
.xd-t { font: 400 60px "Liberation Sans", sans-serif; fill: #fbdff0; }
.cal-m { font: 400 15px "Liberation Sans", sans-serif; fill: #fff; }
.cal-d { font: 400 48px "Liberation Sans", sans-serif; fill: #222; }
.sticky-r { font: 400 13px "Liberation Sans", sans-serif; fill: #d9483b; }
.sticky-b { font: 400 11px "Liberation Sans", sans-serif; fill: #3a3a5a; }
.word-t { font: 400 36px "Liberation Sans", sans-serif; fill: #fff; }
```
